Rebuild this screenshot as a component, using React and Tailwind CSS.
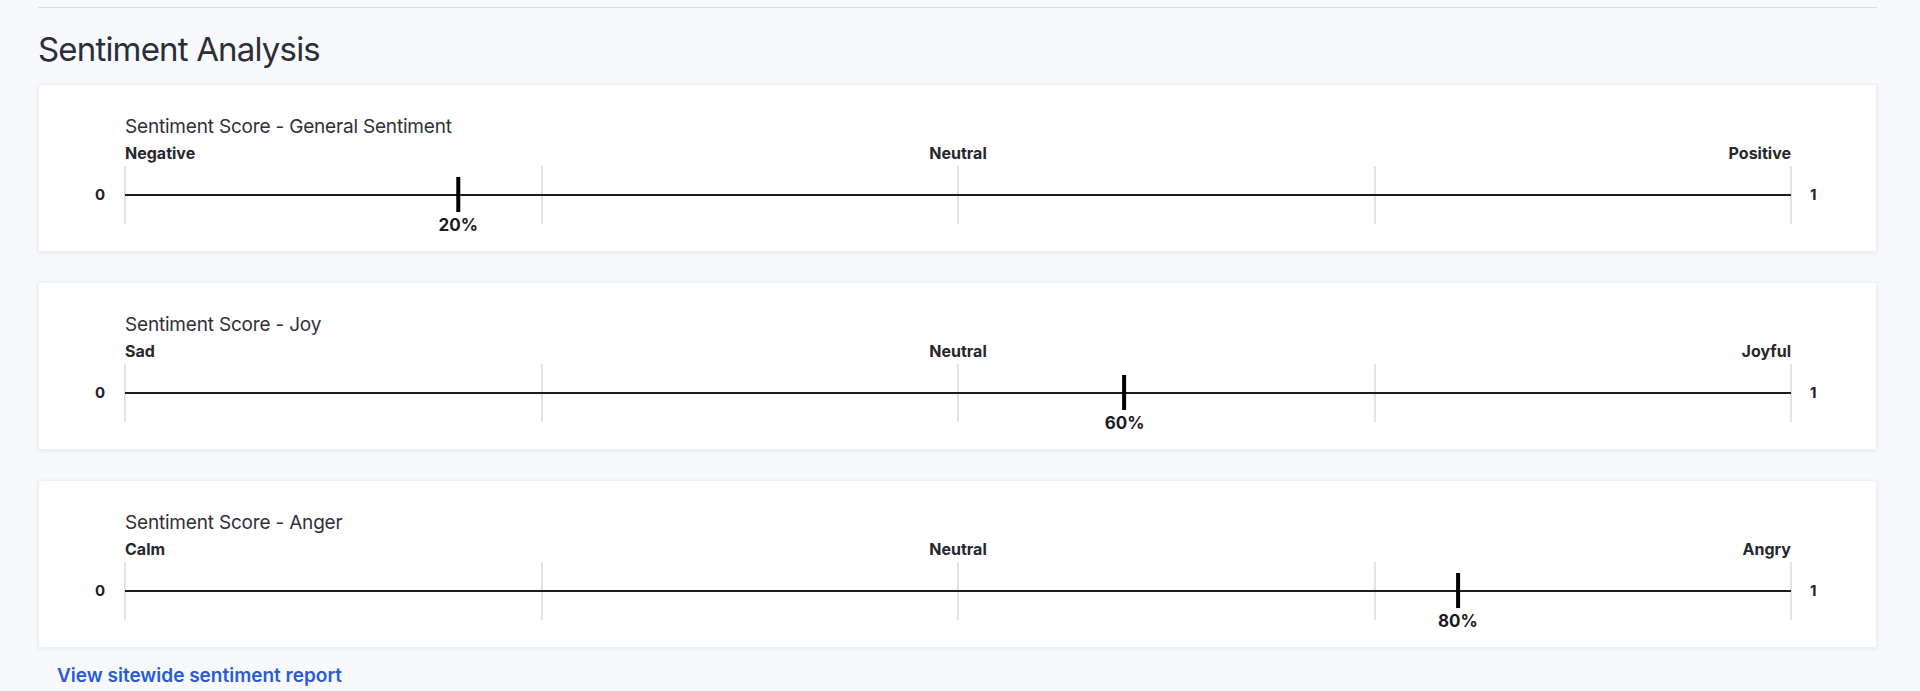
import React from "react";

const scores = [
  { title: "Sentiment Score - General Sentiment", left: "Negative", right: "Positive", value: 20 },
  { title: "Sentiment Score - Joy", left: "Sad", right: "Joyful", value: 60 },
  { title: "Sentiment Score - Anger", left: "Calm", right: "Angry", value: 80 },
];

const ticks = [0, 25, 50, 75, 100];

const ScoreCard = ({ title, left, right, value }) => {
  return (
    <div className="bg-white border border-[#eef0f3] shadow-[0_1px_4px_rgba(15,23,42,0.08)] pt-[30px] pb-[27px]">
      <div className="ml-[86px] mr-[85px]">
        <h3 className="text-[19px] leading-[24px] font-normal tracking-[-0.01em] text-[#2f3038]">{title}</h3>
        {/* axis labels */}
        <div className="mt-[4px] grid grid-cols-3 text-[16px] leading-[20px] font-bold text-[#25262e]">
          <span className="text-left">{left}</span>
          <span className="text-center">Neutral</span>
          <span className="text-right">{right}</span>
        </div>
      </div>

      <div className="mt-[3px] flex items-center">
        <div className="w-[86px] pr-[20px] text-right text-[15px] font-bold text-[#1f2027]">0</div>
        <div className="relative flex-1 h-[58px]">
          {ticks.map((t) => (
            <div
              key={t}
              className="absolute top-0 bottom-0 w-[2px] -ml-px bg-[#e1e2e5]"
              style={{ left: `${t}%` }}
            />
          ))}
          <div className="absolute left-0 right-0 top-[28px] h-[2px] bg-[#1c1c1f]" />
          <div className="absolute top-[11px] flex flex-col items-center -translate-x-1/2" style={{ left: `${value}%` }}>
            <div className="w-[4px] h-[35px] bg-black" />
            <span className="mt-[3px] text-[17px] leading-[20px] font-bold text-[#1a1a1f]">{value}%</span>
          </div>
        </div>
        <div className="w-[85px] pl-[19px] text-[15px] font-bold text-[#1f2027]">1</div>
      </div>
    </div>
  );
};

const App = () => {
  return (
    <div className="min-h-screen bg-[#f8f9fc] pt-[7px] pl-[38px] pr-[43px] font-['Inter',sans-serif]">
      <div className="border-t border-[#d9dce2]" />
      <h2 className="mt-[21px] text-[33px] leading-[40px] tracking-[-0.025em] text-[#2b2d38]">Sentiment Analysis</h2>

      <div className="mt-[15px] flex flex-col gap-[30px]">
        {scores.map((s) => (
          <ScoreCard key={s.title} {...s} />
        ))}
      </div>

      <a href="#" className="inline-block mt-[16px] ml-[19px] text-[19px] leading-[24px] font-semibold text-[#2a5bd7]">
        View sitewide sentiment report
      </a>
    </div>
  );
};

export default App;
